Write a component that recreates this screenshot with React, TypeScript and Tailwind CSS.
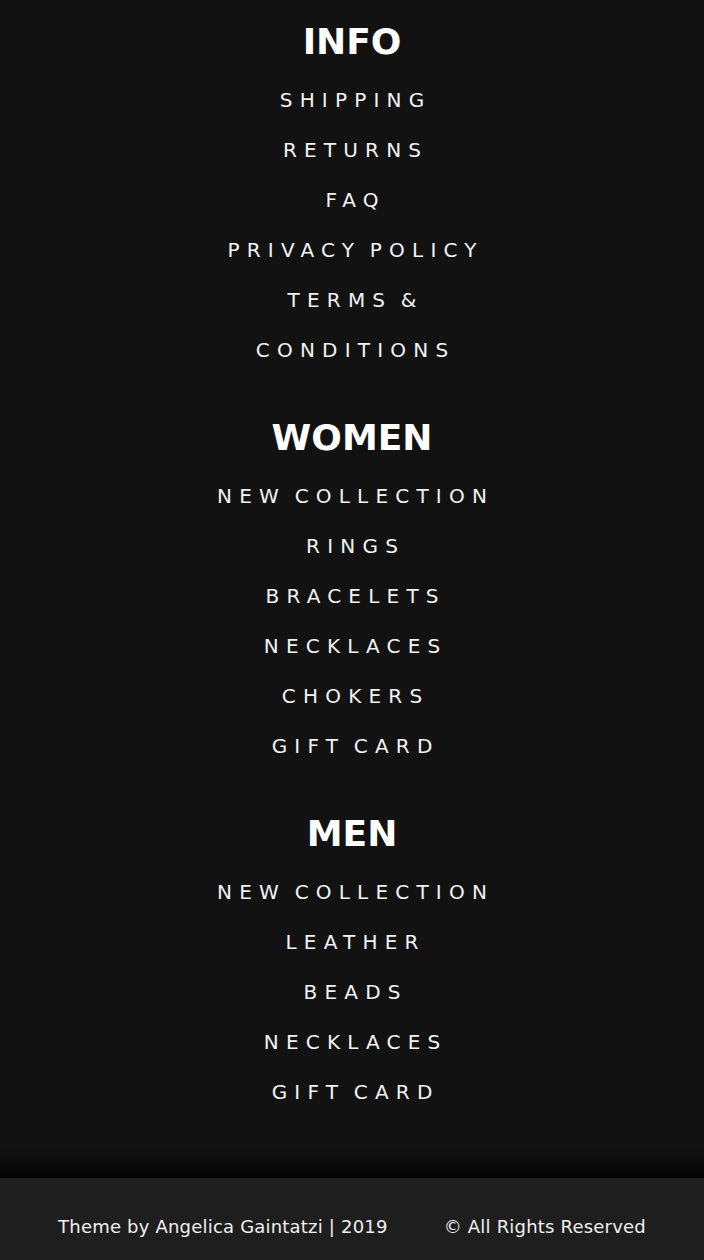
import React from "react";

const sections = [
  {
    title: "INFO",
    links: ["Shipping", "Returns", "FAQ", "Privacy Policy", "Terms & Conditions"],
  },
  {
    title: "WOMEN",
    links: ["New Collection", "Rings", "Bracelets", "Necklaces", "Chokers", "Gift Card"],
  },
  {
    title: "MEN",
    links: ["New Collection", "Leather", "Beads", "Necklaces", "Gift Card"],
  },
];

const FooterSection = ({ title, links }: { title: string; links: string[] }) => {
  return (
    <div className="flex flex-col items-center">
      <h3 className="text-[36px] leading-[52px] font-bold text-white">{title}</h3>
      <ul className="mt-[7px] flex w-[300px] flex-col items-center">
        {links.map((link, index) => (
          <li key={index} className="text-center">
            <a
              href="#"
              className="block pl-[0.36em] text-[20px] leading-[50px] uppercase tracking-[0.36em] text-[#f2f2f2] [word-spacing:-5px]"
            >
              {link}
            </a>
          </li>
        ))}
      </ul>
    </div>
  );
};

export default function App() {
  return (
    <footer
      className="min-h-[1260px] bg-[#121212]"
      style={{ fontFamily: '"DejaVu Sans", sans-serif' }}
    >
      <div className="flex flex-col gap-[37px] pt-4 pb-[33px]">
        {sections.map((s) => (
          <FooterSection key={s.title} title={s.title} links={s.links} />
        ))}
      </div>
      <div className="h-7 bg-gradient-to-b from-[#121212] to-[#040404]"></div>
      <div className="flex h-[82px] items-center justify-center gap-[56px] bg-[#1e1e1e] pt-[14px] text-[18px] tracking-[0.2px] text-[#f0f0f0]">
        <p>Theme by Angelica Gaintatzi | 2019</p>
        <p>© All Rights Reserved</p>
      </div>
    </footer>
  );
}
